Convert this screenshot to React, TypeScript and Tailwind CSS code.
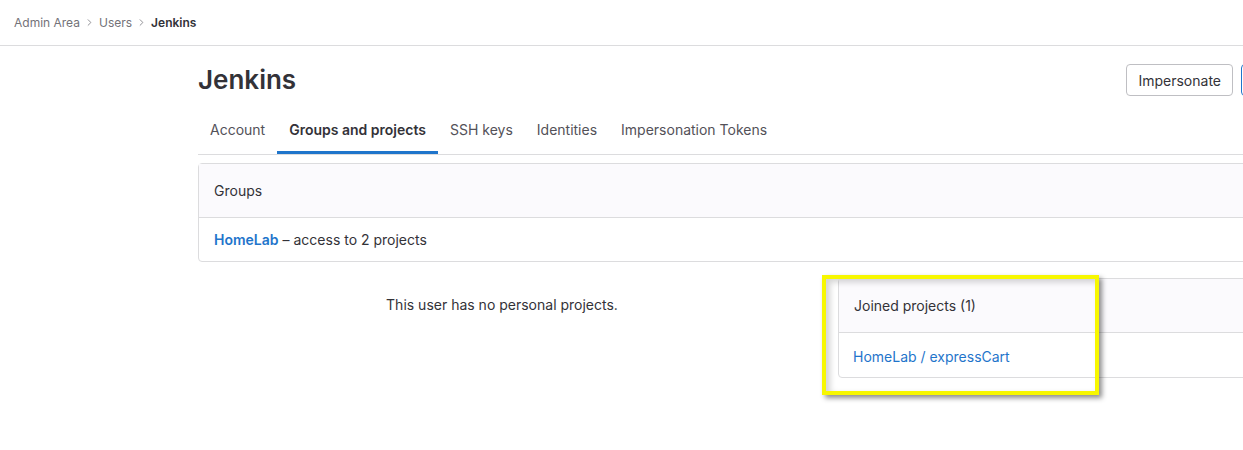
import { ChevronRight } from "lucide-react";

const tabs = ["Account", "Groups and projects", "SSH keys", "Identities", "Impersonation Tokens"];

const App = () => {
  return (
    <div
      className="h-[450px] w-full overflow-hidden bg-white text-[14px] text-[#333238]"
      style={{ fontFamily: "Inter, 'Noto Sans', sans-serif" }}
    >
      {/* breadcrumb bar */}
      <div className="flex h-[46px] w-[1280px] items-center border-b border-[#dcdcde] pl-[14px] text-[12px]">
        <span className="text-[#737278]">Admin Area</span>
        <ChevronRight size={11} className="mx-[4px] text-[#89888d]" />
        <span className="text-[#737278]">Users</span>
        <ChevronRight size={11} className="mx-[4px] text-[#89888d]" />
        <span className="font-semibold text-[#333238]">Jenkins</span>
      </div>

      <div className="ml-[198px] w-[1248px]">
        {/* title row */}
        <div className="flex items-center justify-between pt-[18px]">
          <h1 className="text-[26px] font-semibold leading-8 text-[#333238]">Jenkins</h1>
          <div className="flex gap-2">
            <button className="h-8 rounded border border-[#bfbfc3] px-[11px] text-[14px] text-[#333238]">
              Impersonate
            </button>
            <button className="h-8 w-[80px] rounded border border-[#1f75cb] px-3 text-[14px] text-[#1f75cb]">
              Edit
            </button>
            <button className="h-8 w-[117px] rounded border border-[#bfbfc3] px-3 text-[14px] text-[#333238]">
              Actions
            </button>
          </div>
        </div>

        {/* tabs */}
        <div className="mt-[11px] flex border-b border-[#dcdcde]">
          {tabs.map((t) => (
            <div
              key={t}
              className={
                t === "Groups and projects"
                  ? "flex h-[47px] items-center border-b-[3px] border-[#1f75cb] px-3 pt-[1px] font-semibold text-[#333238]"
                  : "flex h-[47px] items-center border-b-[3px] border-transparent px-3 pt-[1px] text-[#535158]"
              }
            >
              {t}
            </div>
          ))}
        </div>

        {/* groups card */}
        <div className="mt-2 rounded border border-[#dcdcde]">
          <div className="flex h-[54px] items-center border-b border-[#dcdcde] bg-[#fbfafd] px-[15px]">
            Groups
          </div>
          <div className="flex h-[43px] items-center px-[15px]">
            <span className="font-semibold text-[#1f75cb]">HomeLab</span>
            <span className="ml-1 text-[#333238]">– access to 2 projects</span>
          </div>
        </div>

        {/* projects */}
        <div className="mt-4 grid grid-cols-2 gap-8">
          <div className="pt-[17px] text-center leading-5 text-[#333238]">
            This user has no personal projects.
          </div>
          <div className="relative">
            <div className="rounded border border-[#dcdcde]">
              <div className="flex h-[54px] items-center border-b border-[#dcdcde] bg-[#fbfafd] px-[15px]">
                Joined projects (1)
              </div>
              <div className="flex h-[44px] items-center px-[14px] pt-[3px] text-[#1f75cb]">
                HomeLab / expressCart
              </div>
            </div>
            {/* highlight annotation */}
            <div className="pointer-events-none absolute left-[-16px] top-[-3px] h-[120px] w-[277px] border-4 border-[#f7f700] shadow-[inset_4px_3px_6px_rgba(0,0,0,0.18),3px_3px_5px_rgba(0,0,0,0.45)]" />
          </div>
        </div>
      </div>
    </div>
  );
};

export default App;
